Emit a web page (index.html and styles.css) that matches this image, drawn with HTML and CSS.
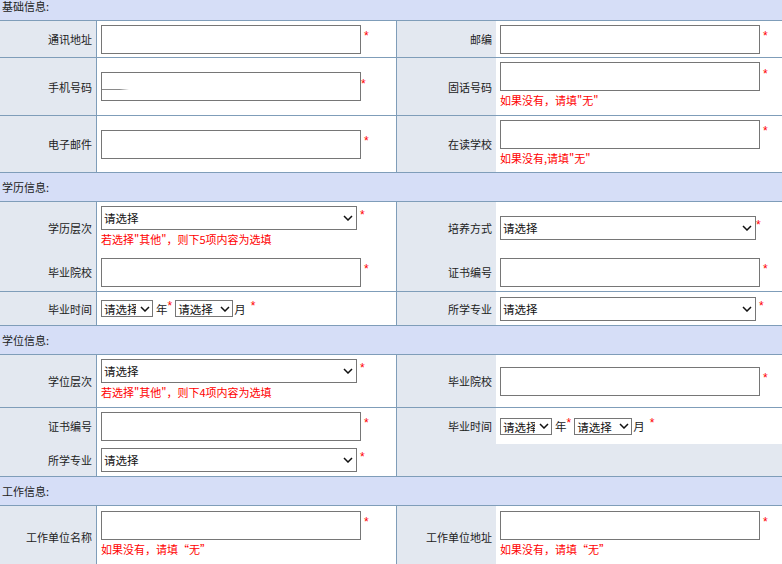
FILE: index.html
```html
<!DOCTYPE html>
<html lang="zh-CN">
<head>
<meta charset="utf-8">
<title>报名信息</title>
<link rel="stylesheet" href="styles.css">
</head>
<body>
<div class="form">

  <div class="sec first">基础信息:</div>

  <div class="row h37">
    <div class="lab">通讯地址</div>
    <div class="fld"><div class="line"><input class="txt" type="text"><span class="req sp">*</span></div></div>
    <div class="lab lab2">邮编</div>
    <div class="fld"><div class="line"><input class="txt" type="text"><span class="req sp">*</span></div></div>
  </div>

  <div class="row h58">
    <div class="lab">手机号码</div>
    <div class="fld"><div class="line"><input class="txt mobile" type="text"><span class="req">*</span></div></div>
    <div class="lab lab2">固话号码</div>
    <div class="fld noted">
      <div class="line"><input class="txt" type="text"><span class="req sp">*</span></div>
      <div class="hint">如果没有，请填"无"</div>
    </div>
  </div>

  <div class="row h57">
    <div class="lab">电子邮件</div>
    <div class="fld"><div class="line"><input class="txt" type="text"><span class="req sp">*</span></div></div>
    <div class="lab lab2">在读学校</div>
    <div class="fld noted">
      <div class="line"><input class="txt" type="text"><span class="req sp">*</span></div>
      <div class="hint">如果没有,请填"无"</div>
    </div>
  </div>

  <div class="sec">学历信息:</div>

  <div class="row h51 open">
    <div class="lab">学历层次</div>
    <div class="fld noted">
      <div class="line"><select class="sel"><option>请选择</option></select><span class="req sp">*</span></div>
      <div class="hint">若选择"其他"，则下5项内容为选填</div>
    </div>
    <div class="lab lab2">培养方式</div>
    <div class="fld"><div class="line"><select class="sel"><option>请选择</option></select><span class="req">*</span></div></div>
  </div>

  <div class="row h39">
    <div class="lab">毕业院校</div>
    <div class="fld"><div class="line"><input class="txt" type="text"><span class="req sp">*</span></div></div>
    <div class="lab lab2">证书编号</div>
    <div class="fld"><div class="line"><input class="txt" type="text"><span class="req sp">*</span></div></div>
  </div>

  <div class="row h34">
    <div class="lab">毕业时间</div>
    <div class="fld">
      <div class="line">
        <select class="sel mini year"><option>请选择</option></select><span class="unit">年</span><span class="req">*</span>
        <select class="sel mini month"><option>请选择</option></select><span class="unit tight">月</span><span class="req sp2">*</span>
      </div>
    </div>
    <div class="lab lab2">所学专业</div>
    <div class="fld"><div class="line"><select class="sel"><option>请选择</option></select><span class="req sp">*</span></div></div>
  </div>

  <div class="sec">学位信息:</div>

  <div class="row h53">
    <div class="lab">学位层次</div>
    <div class="fld noted">
      <div class="line"><select class="sel"><option>请选择</option></select><span class="req sp">*</span></div>
      <div class="hint">若选择"其他"，则下4项内容为选填</div>
    </div>
    <div class="lab lab2">毕业院校</div>
    <div class="fld"><div class="line"><input class="txt" type="text"><span class="req sp">*</span></div></div>
  </div>

  <div class="row h37 open">
    <div class="lab">证书编号</div>
    <div class="fld"><div class="line"><input class="txt" type="text"><span class="req sp">*</span></div></div>
    <div class="lab lab2">毕业时间</div>
    <div class="fld">
      <div class="line">
        <select class="sel mini year"><option>请选择</option></select><span class="unit">年</span><span class="req">*</span>
        <select class="sel mini month"><option>请选择</option></select><span class="unit tight">月</span><span class="req sp2">*</span>
      </div>
    </div>
  </div>

  <div class="row h33">
    <div class="lab">所学专业</div>
    <div class="fld"><div class="line"><select class="sel"><option>请选择</option></select><span class="req sp">*</span></div></div>
    <div class="lab lab2 wide"></div>
  </div>

  <div class="sec">工作信息:</div>

  <div class="row h62">
    <div class="lab">工作单位名称</div>
    <div class="fld noted high">
      <div class="line"><input class="txt" type="text"><span class="req sp">*</span></div>
      <div class="hint">如果没有，请填“无”</div>
    </div>
    <div class="lab lab2">工作单位地址</div>
    <div class="fld noted high">
      <div class="line"><input class="txt" type="text"><span class="req sp">*</span></div>
      <div class="hint">如果没有，请填“无”</div>
    </div>
  </div>

</div>
</body>
</html>
```

FILE: styles.css
```css
html, body {
  margin: 0;
  padding: 0;
  background: #fff;
}

body {
  font-family: "Noto Sans CJK SC", "Noto Sans", sans-serif;
  font-size: 11px;
  color: #222;
  overflow: hidden;
}

/* section title bars */
.sec {
  height: 28px;
  line-height: 28px;
  padding-left: 2px;
  background: #d6def7;
  border-bottom: 1px solid #7f9db9;
  color: #222;
}

.sec.first {
  height: 20px;
  line-height: 12px;
}

/* one form row: label | field | label | field */
.row {
  display: grid;
  grid-template-columns: 96px 300px 100px 1fr;
  border-bottom: 1px solid #7f9db9;
}

.row.open {
  border-bottom: 0;
}

.h33 { height: 32px; }
.h34 { height: 33px; }
.h37 { height: 36px; }
.h39 { height: 38px; }
.h51 { height: 51px; }
.h53 { height: 52px; }
.h57 { height: 56px; }
.h58 { height: 57px; }
.h62 { height: 62px; }

.lab {
  background: #e3e8f0;
  display: flex;
  align-items: center;
  justify-content: flex-end;
  padding-right: 4px;
  white-space: nowrap;
}

.lab2 {
  border-left: 1px solid #7f9db9;
}

.lab.wide {
  grid-column: 3 / 5;
}

.fld {
  background: #fff;
  display: flex;
  flex-direction: column;
  justify-content: center;
  padding-left: 4px;
}

/* fields with a note underneath sit a little higher */
.fld.noted {
  padding-bottom: 4px;
}

.fld.noted.high {
  padding-bottom: 8px;
}

.row > .fld:nth-child(2) {
  border-left: 1px solid #7f9db9;
}

.line {
  display: flex;
  align-items: center;
  white-space: nowrap;
}

.txt {
  box-sizing: border-box;
  width: 260px;
  height: 29px;
  margin: 0;
  padding: 0 3px;
  border: 1px solid #767676;
  border-radius: 0;
  background: #fff;
  font: inherit;
  outline: none;
}

/* faint dash left in the phone field */
.txt.mobile {
  background-image: linear-gradient(to right, #8a8a8a 0, #8a8a8a 65%, rgba(138, 138, 138, 0) 100%);
  background-repeat: no-repeat;
  background-size: 27px 1px;
  background-position: 0 16px;
}

.sel {
  box-sizing: border-box;
  width: 256px;
  height: 24px;
  margin: 0;
  padding: 0 16px 0 2px;
  border: 1px solid #767676;
  border-radius: 0;
  -webkit-appearance: none;
  appearance: none;
  font: inherit;
  font-size: 11.5px;
  color: #111;
  background-color: #fff;
  background-image: url("data:image/svg+xml,%3Csvg xmlns='http://www.w3.org/2000/svg' width='10' height='6' viewBox='0 0 10 6'%3E%3Cpath d='M1 1l4 4 4-4' fill='none' stroke='%23111' stroke-width='1.5'/%3E%3C/svg%3E");
  background-repeat: no-repeat;
  background-position: right 3px center;
  background-size: 10px 6px;
  outline: none;
}

.sel.mini {
  height: 17px;
  padding-left: 2px;
  background-position: right 2px center;
}

.sel.year { width: 52px; }
.sel.month { width: 58px; }

.unit {
  margin-left: 3px;
  color: #222;
  font-size: 11.5px;
}

.unit.tight {
  margin-left: 1px;
}

.req {
  color: #f00;
  font-family: "Liberation Sans", Arial, sans-serif;
  font-size: 12px;
  line-height: 1;
  margin-top: -6px;
  margin-right: 3px;
}

.req.sp { margin-left: 3px; }
.req.sp2 { margin-left: 5px; }

.hint {
  color: #f00;
  line-height: 14px;
  margin-top: 2px;
  white-space: nowrap;
}
```
